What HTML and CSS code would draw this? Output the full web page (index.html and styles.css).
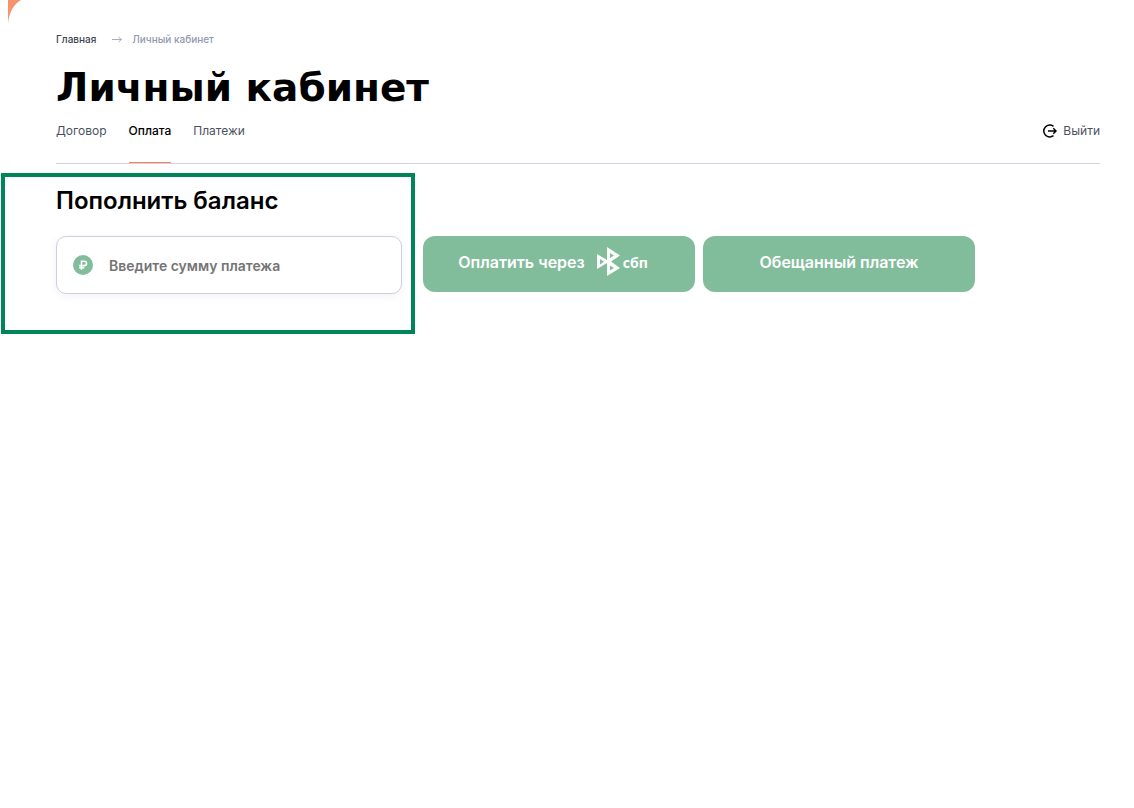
FILE: index.html
```html
<!DOCTYPE html>
<html lang="ru">
<head>
    <meta charset="UTF-8">
    <meta name="viewport" content="width=device-width, initial-scale=1.0">
    <title>Личный кабинет</title>
    <link rel="stylesheet" href="styles.css">
</head>
<body>
    <svg class="corner" viewBox="0 0 14 24" aria-hidden="true">
        <path d="M0 0H13C6 4 1 12 0 24Z" fill="#f6946c"/>
    </svg>

    <div class="container">
        <nav class="breadcrumbs">
            <a href="#">Главная</a>
            <svg class="arrow" viewBox="0 0 10 8" aria-hidden="true">
                <path d="M0 4.500H9.500M6.500 2L9.500 4.500L6.500 7" fill="none" stroke="#a9adbd" stroke-width="1"/>
            </svg>
            <span>Личный кабинет</span>
        </nav>

        <h1>Личный кабинет</h1>

        <div class="tabs">
            <a class="tab" href="#">Договор</a>
            <a class="tab active" href="#">Оплата</a>
            <a class="tab" href="#">Платежи</a>
            <a class="tab logout" href="#">
                <svg viewBox="0 0 16 16" aria-hidden="true">
                    <path d="M12.500 3.300A6 6 0 1 0 12.500 12.700M7 8H15M12.300 5.300L15 8L12.300 10.700" fill="none" stroke="#000" stroke-width="1.5"/>
                </svg>
                Выйти
            </a>
        </div>

        <form class="payment">
            <h2>Пополнить баланс</h2>
            <div class="payment-row">
                <div class="amount">
                    <svg viewBox="0 0 20 20" aria-hidden="true">
                        <circle cx="10" cy="10" r="10" fill="#81bd9b"/>
                        <path d="M8.500 14.800V6.200H11.300A2.200 2.200 0 0 1 11.300 10.600H6.200M6.200 12.800H11.300" fill="none" stroke="#fff" stroke-width="1.6"/>
                    </svg>
                    <input type="text" aria-label="Сумма платежа" placeholder="Введите сумму платежа">
                </div>
                <button class="btn" type="button">
                    Оплатить через
                    <svg class="sbp" viewBox="0 0 23 30" aria-hidden="true">
                        <path fill="#fff" fill-rule="evenodd" d="M0 7L10 13V0L23 8.500L14 14.500L23 21L10 29V16L0 22ZM3 12V17.500L7 14.700ZM13 6V11L17 8.500ZM13 18.500V23.500L17 21Z"/>
                    </svg>
                    <span class="sbp-name">сбп</span>
                </button>
                <button class="btn" type="button">Обещанный платеж</button>
            </div>
        </form>
    </div>
</body>
</html>
```

FILE: styles.css
```css
* {
    box-sizing: border-box;
}

body {
    min-height: 100vh;
    margin: 0;
    font-family: Inter, "Open Sans", sans-serif;
    color: #000;
    background-color: #fff;
}

a {
    color: inherit;
    text-decoration: none;
}

.corner {
    position: absolute;
    top: 0;
    left: 8px;
    width: 14px;
    height: 24px;
}

.container {
    padding: 31px 34px 0 56px;
}

.breadcrumbs {
    display: flex;
    align-items: center;
    font-size: 10px;
    font-weight: 500;
    line-height: 16px;
    color: #9298b2;
}

.breadcrumbs a {
    color: #3c4351;
}

.arrow {
    width: 10px;
    height: 8px;
    margin: 0 10px 0 16px;
}

h1 {
    margin: 17px 0 10px;
    font-family: "DejaVu Sans", sans-serif;
    font-size: 39px;
    line-height: 48px;
    font-weight: bold;
}

.tabs {
    display: flex;
    gap: 22px;
    height: 42px;
    border-bottom: 1px solid #d3d3e0;
}

.tab {
    font-size: 12px;
    line-height: 18px;
    color: #4b5261;
}

.tab.active {
    color: #000;
    font-weight: 500;
    border-bottom: 1px solid #fb7f5b;
}

.logout {
    display: flex;
    gap: 6px;
    margin-left: auto;
}

.logout svg {
    width: 16px;
    height: 18px;
}

.payment {
    position: relative;
    padding: 21px 0 42px;
}

/* frame around the amount field */
.payment::before {
    content: "";
    position: absolute;
    top: 9px;
    left: -55px;
    box-sizing: border-box;
    width: 414px;
    height: 161px;
    border: 4px solid #008558;
    pointer-events: none;
}

h2 {
    margin: 0 0 19px;
    font-size: 24px;
    line-height: 32px;
    font-weight: 600;
}

.payment-row {
    display: flex;
    flex-wrap: wrap;
    align-items: flex-start;
    gap: 8px;
}

.amount {
    display: flex;
    align-items: center;
    gap: 16px;
    width: 346px;
    height: 58px;
    margin-right: 13px;
    padding: 0 16px;
    border: 1px solid #cfcfde;
    border-radius: 10px;
    box-shadow: 0 2px 8px rgba(80, 90, 160, 0.08);
}

.amount svg {
    flex: none;
    width: 20px;
    height: 20px;
}

.amount input {
    flex: 1;
    min-width: 0;
    padding: 0;
    border: none;
    outline: none;
    font: inherit;
    font-size: 14px;
    font-weight: 600;
    background: none;
}

.amount input::placeholder {
    color: #757575;
}

.btn {
    display: flex;
    align-items: center;
    justify-content: center;
    width: 272px;
    height: 56px;
    padding: 0 0 4px;
    border: none;
    border-radius: 12px;
    font: inherit;
    font-size: 16px;
    font-weight: 600;
    color: #fff;
    background-color: #81bd9b;
    cursor: pointer;
}

.btn:hover {
    background-color: #6fae8a;
}

.sbp {
    width: 23px;
    height: 30px;
    margin: 0 3px 0 12px;
}

.sbp-name {
    margin-right: 12px;
    font-family: "Open Sans", sans-serif;
    font-size: 14px;
    font-weight: bold;
}
```
